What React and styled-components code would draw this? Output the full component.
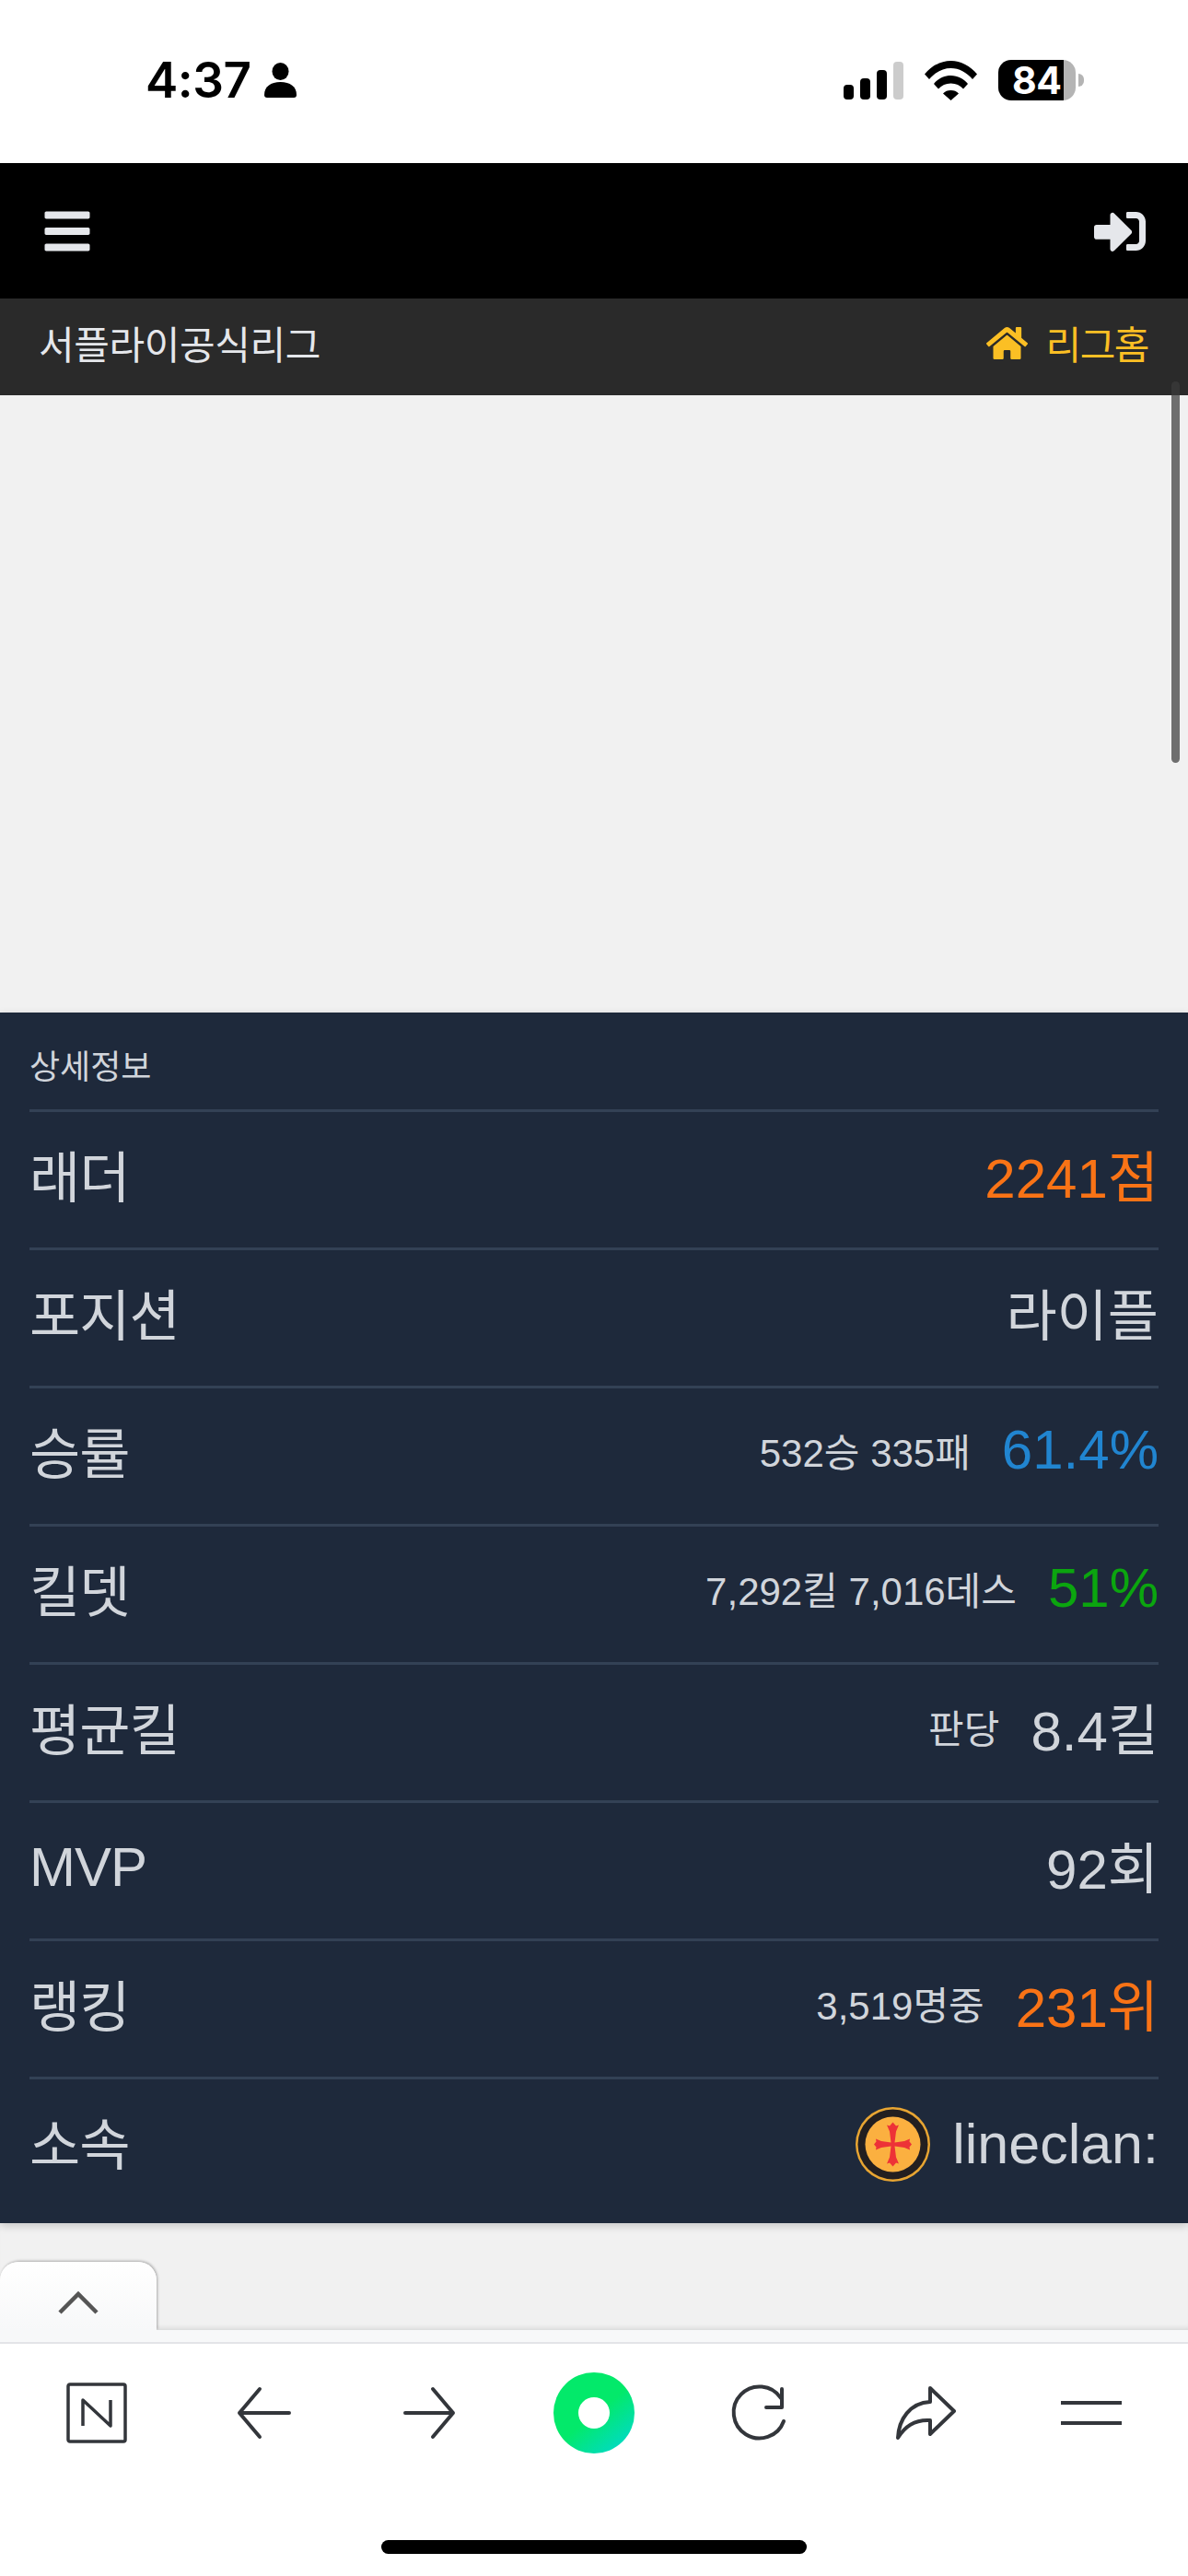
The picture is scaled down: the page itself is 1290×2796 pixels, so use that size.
import React from 'react'
import styled, { createGlobalStyle } from 'styled-components'
import { FaBars, FaSignInAlt, FaHome } from 'react-icons/fa'

const GlobalStyle = createGlobalStyle`
  html, body {
    margin: 0;
    padding: 0;
    background: #fff;
  }
  * {
    box-sizing: border-box;
  }
`
const Page = styled.div`
  position: relative;
  width: 1290px;
  height: 2796px;
  overflow: hidden;
  display: flex;
  flex-direction: column;
  background: #fff;
  font-family: "Liberation Sans", "Noto Sans CJK KR", sans-serif;
`

// 상태바
const StatusBar = styled.div`
  height: 177px;
  padding: 0 122px 3px 158px;
  display: flex;
  justify-content: space-between;
  align-items: center;
  flex-shrink: 0;
`
const StatusLeft = styled.div`
  display: flex;
  align-items: center;
  gap: 15px;
`
const Time = styled.span`
  font-family: Inter, "Liberation Sans", sans-serif;
  font-size: 53px;
  font-weight: 600;
  line-height: 50px;
  color: #000;
  letter-spacing: -0.5px;
`
const StatusRight = styled.div`
  display: flex;
  align-items: center;
  gap: 23px;
`
const Battery = styled.div`
  position: relative;
  width: 84px;
  height: 44px;
  border-radius: 14px;
  background: linear-gradient(90deg, #000 0, #000 71px, #b4b4b4 71px);
  color: #fff;
  font-family: Inter, "Liberation Sans", sans-serif;
  font-size: 41px;
  font-weight: 700;
  line-height: 44px;
  padding-left: 15px;
  letter-spacing: -0.5px;
  &::after {
    content: '';
    position: absolute;
    right: -9px;
    top: 15px;
    width: 6px;
    height: 14px;
    border-radius: 0 7px 7px 0;
    background: #b4b4b4;
  }
`

// 헤더
const Header = styled.div`
  height: 147px;
  flex-shrink: 0;
  padding: 0 46px 0 45px;
  background: #000;
  display: flex;
  justify-content: space-between;
  align-items: center;
  color: #e5e7eb;
`
const SubBar = styled.div`
  height: 105px;
  flex-shrink: 0;
  padding: 0 43px 10px 42px;
  background: #2a2a2a;
  display: flex;
  justify-content: space-between;
  align-items: center;
  font-size: 42px;
  color: #e5e7eb;
  letter-spacing: -0.4px;
`
const HomeLink = styled.span`
  display: flex;
  align-items: center;
  gap: 20px;
  color: #fbbf24;
  letter-spacing: -1.5px;
  svg {
    margin-top: 2px;
  }
`
const AdArea = styled.div`
  height: 670px;
  flex-shrink: 0;
  background: #f1f1f1;
`
const ScrollThumb = styled.div`
  position: absolute;
  right: 9px;
  top: 414px;
  width: 9px;
  height: 414px;
  border-radius: 5px;
  background: rgba(60, 60, 60, 0.72);
`

// 상세정보
const Panel = styled.section`
  flex-shrink: 0;
  padding: 0 32px 9px;
  background: #1e293b;
  color: #d1d5db;
  box-shadow: 0 3px 9px rgba(0, 0, 0, 0.18);
  position: relative;
`
const PanelTitle = styled.div`
  height: 105px;
  display: flex;
  align-items: center;
  font-size: 36px;
  padding-top: 6px;
`
const Row = styled.div`
  height: 150px;
  padding-bottom: 14px;
  border-top: 3px solid #334155;
  display: flex;
  justify-content: space-between;
  align-items: center;
  font-size: 60px;
`
const Label = styled.span`
  letter-spacing: -1px;
  padding-top: ${props => (props.$latin ? 6 : 0)}px;
`
const Value = styled.div`
  display: flex;
  align-items: center;
  gap: ${props => props.$gap || 34}px;
`
const Sub = styled.span`
  font-size: 42px;
`
const Strong = styled.span`
  color: ${props => props.$color || '#d1d5db'};
`
const ClanName = styled.span`
  font-size: 61px;
  padding-top: 6px;
`
const Emblem = styled.svg`
  margin-top: 7px;
`

// 하단
const Spacer = styled.div`
  height: 116px;
  flex-shrink: 0;
  background: #f1f1f1;
  box-shadow: inset 0 -6px 6px -5px rgba(0, 0, 0, 0.14);
  display: flex;
  align-items: flex-end;
`
const Tab = styled.div`
  width: 170px;
  height: 74px;
  background: linear-gradient(180deg, #fff, #f7f8f9);
  border-radius: 20px 20px 0 0;
  box-shadow: 1px -1px 3px rgba(0, 0, 0, 0.3);
  display: flex;
  justify-content: center;
  padding-top: 31px;
  clip-path: inset(-6px -8px 0 0);
`
const Strip = styled.div`
  height: 15px;
  flex-shrink: 0;
  background: #f7f8f9;
  border-bottom: 2px solid #e3e4e8;
`
const Toolbar = styled.div`
  height: 150px;
  flex-shrink: 0;
  padding: 0 15px;
  display: grid;
  grid-template-columns: repeat(7, 180px);
  align-items: center;
  justify-items: center;
`
const HomeBar = styled.div`
  width: 462px;
  height: 15px;
  margin: 63px auto 0;
  border-radius: 8px;
  background: #000;
`

const PersonIcon = () => (
  <svg width="35" height="38" viewBox="0 0 35 38">
    <ellipse cx="17.5" cy="9.5" rx="9" ry="9.5" fill="#000" />
    <path d="M0 35c0-9 7-14 17.5-14S35 26 35 35c0 2-1 3-3 3H3c-2 0-3-1-3-3z" fill="#000" />
  </svg>
)
const SignalIcon = () => (
  <svg width="65" height="41" viewBox="0 0 65 41">
    <rect x="0" y="25" width="11" height="16" rx="4" fill="#000" />
    <rect x="18" y="18" width="11" height="23" rx="4" fill="#000" />
    <rect x="36" y="9" width="11" height="32" rx="4" fill="#000" />
    <rect x="54" y="0" width="11" height="41" rx="4" fill="#ccc" />
  </svg>
)
const WifiIcon = () => (
  <svg width="57" height="43" viewBox="0 0 57 43">
    <path d="M0 14.500C7.500 5.500 17.500 0 28.500 0S49.500 5.500 57 14.500L52 20C45.500 12.500 37.500 8 28.500 8S11.500 12.500 5 20z" fill="#000" />
    <path d="M10 25C14.500 19.500 21 16 28.500 16S42.500 19.500 47 25l-5 5.500c-3.500-3.800-8-6-13.500-6s-10 2.200-13.500 6z" fill="#000" />
    <path d="M20 35.500c2.200-2.500 5-3.500 8.500-3.500s6.300 1 8.500 3.500L28.500 43z" fill="#000" />
  </svg>
)
const ClanEmblem = () => (
  <Emblem width="81" height="81" viewBox="0 0 81 81">
    <circle cx="40.500" cy="40.500" r="40.500" fill="#e8a532" />
    <circle cx="40.500" cy="40.500" r="38" fill="#231f20" />
    <circle cx="40.500" cy="40.500" r="30" fill="#fbb040" />
    <path
      d="M40.500 16.500L44 20.500L47 19.500L44 26.500L42.500 38.500L53 37L59 34.500L58.500 37.500L61 40.500L58.500 43.500L59 46.500L53 44L42.500 42.500L44 54.500L47 61.500L44 60.500L40.500 64.500L37 60.500L34 61.500L37 54.500L38.500 42.500L28 44L22 46.500L22.500 43.500L20 40.500L22.500 37.500L22 34.500L28 37L38.500 38.500L37 26.500L34 19.500L37 20.500z"
      fill="#ed3237"
    />
  </Emblem>
)
const ChevronUp = () => (
  <svg width="44" height="26" viewBox="0 0 44 26">
    <path d="M2 24L22 4l20 20" fill="none" stroke="#555" strokeWidth="4.500" />
  </svg>
)
const NaverIcon = () => (
  <svg width="66" height="66" viewBox="0 0 66 66">
    <rect x="2" y="2" width="62" height="62" rx="2" fill="none" stroke="#33363b" strokeWidth="3.500" />
    <path d="M18 47V19l30 28V19" fill="none" stroke="#33363b" strokeWidth="3.500" strokeLinejoin="round" />
  </svg>
)
const LineIcon = ({ children, size = 66 }) => (
  <svg width={size} height={size} viewBox="0 0 66 66" fill="none" stroke="#33363b" strokeWidth="4" strokeLinecap="round" strokeLinejoin="round">
    {children}
  </svg>
)
const GreenDot = () => (
  <svg width="88" height="88" viewBox="0 0 88 88">
    <defs>
      <linearGradient id="dot" x1="0.3" y1="0.25" x2="0.9" y2="1">
        <stop offset="0.35" stopColor="#03e96a" />
        <stop offset="1" stopColor="#00d8d2" />
      </linearGradient>
    </defs>
    <circle cx="44" cy="44" r="44" fill="url(#dot)" />
    <circle cx="44" cy="44" r="17" fill="#fff" />
  </svg>
)

const rows = [
  { label: '래더', value: '2241점', color: '#f97316' },
  { label: '포지션', value: '라이플' },
  { label: '승률', sub: '532승 335패', value: '61.4%', color: '#2185d0' },
  { label: '킬뎃', sub: '7,292킬 7,016데스', value: '51%', color: '#0ba50f' },
  { label: '평균킬', sub: '판당', value: '8.4킬' },
  { label: 'MVP', latin: true, value: '92회' },
  { label: '랭킹', sub: '3,519명중', value: '231위', color: '#f97316' }
]

export default function App() {
  return (
    <Page>
      <GlobalStyle />
      <StatusBar>
        <StatusLeft>
          <Time>4:37</Time>
          <PersonIcon />
        </StatusLeft>
        <StatusRight>
          <SignalIcon />
          <WifiIcon />
          <Battery>84</Battery>
        </StatusRight>
      </StatusBar>

      <Header>
        <FaBars size={56} />
        <FaSignInAlt size={56} />
      </Header>
      <SubBar>
        <span>서플라이공식리그</span>
        <HomeLink>
          <FaHome size={45} />
          리그홈
        </HomeLink>
      </SubBar>
      <AdArea />
      <ScrollThumb />

      <Panel>
        <PanelTitle>상세정보</PanelTitle>
        {rows.map(item => (
          <Row key={item.label}>
            <Label $latin={item.latin}>{item.label}</Label>
            <Value>
              {item.sub && <Sub>{item.sub}</Sub>}
              <Strong $color={item.color}>{item.value}</Strong>
            </Value>
          </Row>
        ))}
        <Row>
          <Label>소속</Label>
          <Value $gap={24}>
            <ClanEmblem />
            <ClanName>lineclan:</ClanName>
          </Value>
        </Row>
      </Panel>

      <Spacer>
        <Tab>
          <ChevronUp />
        </Tab>
      </Spacer>
      <Strip />
      <Toolbar>
        <NaverIcon />
        <LineIcon>
          <path d="M62 33H8M30 7L8 33l22 26" />
        </LineIcon>
        <LineIcon>
          <path d="M8 33h52M38 7l22 26-22 26" />
        </LineIcon>
        <GreenDot />
        <LineIcon>
          <path d="M59 42a28 28 0 1 1-3-25M57 7v20H40" />
        </LineIcon>
        <LineIcon>
          <path d="M38 6l26 25-26 25V41C24 40 12 45 3 60c1-20 13-38 35-39z" />
        </LineIcon>
        <LineIcon>
          <path d="M0 22h66M0 44h66" strokeLinecap="round" />
        </LineIcon>
      </Toolbar>
      <HomeBar />
    </Page>
  )
}
